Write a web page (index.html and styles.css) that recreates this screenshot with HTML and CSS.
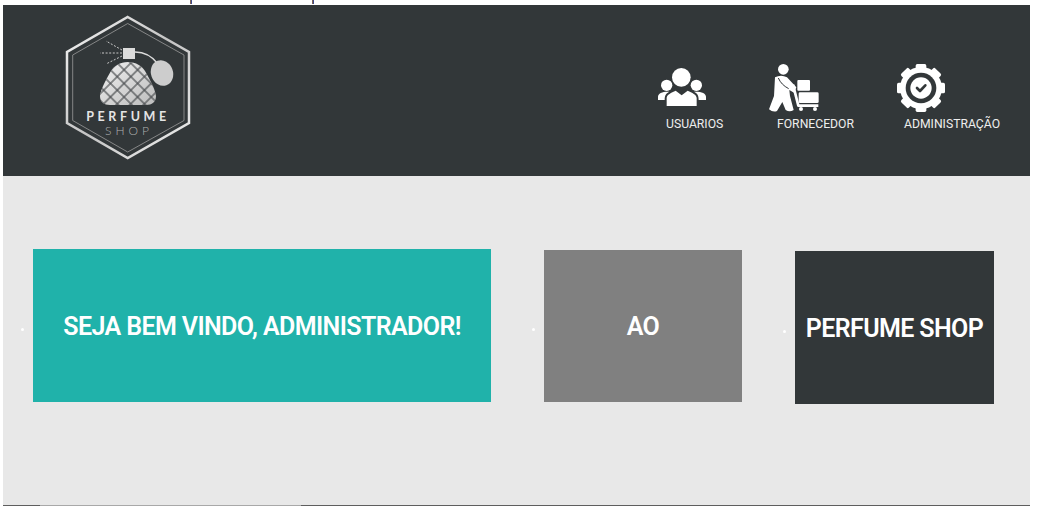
FILE: index.html
```html
<!DOCTYPE html>
<html lang="pt">
<head>
<meta charset="utf-8">
<title>Perfume Shop</title>
<link rel="stylesheet" href="styles.css">
</head>
<body>
<div class="topstrip"><span class="mark mark-a"></span><span class="mark mark-b"></span></div>
<div class="page">
  <header class="header">
    <svg class="logo" viewBox="63 12 130 150" width="130" height="150" aria-label="Perfume Shop">
      <defs>
        <linearGradient id="metal" x1="0" y1="0" x2="1" y2="1">
          <stop offset="0" stop-color="#f0f0f0"/><stop offset="1" stop-color="#bcbcbc"/>
        </linearGradient>
        <linearGradient id="edge" x1="0" y1="0" x2="1" y2="1">
          <stop offset="0" stop-color="#f4f4f4"/><stop offset="0.5" stop-color="#c4c4c4"/><stop offset="1" stop-color="#f0f0f0"/>
        </linearGradient>
        <pattern id="net" width="9.6" height="9.6" patternUnits="userSpaceOnUse" patternTransform="rotate(45 128 84)">
          <rect width="9.6" height="9.6" fill="none" stroke="#4a4d50" stroke-width="1.2"/>
        </pattern>
      </defs>
      <polygon class="hex-outer" points="127.7,17 189,52 189,123 127.7,158 67,123 67,52"/>
      <polygon class="hex-inner" points="127.7,23.5 184,55 184,120.5 127.7,152 72.7,120.5 72.7,55"/>
      <path class="spray" d="M122 53H100M122 50L106 41M122 56L106 64"/>
      <rect x="123" y="48" width="12" height="11" fill="#dcdcdc"/>
      <path class="tube" d="M135 52C145 52 152 56 158 64"/>
      <ellipse cx="162" cy="73" rx="11" ry="13" transform="rotate(-20 162 73)" fill="#cdcdcd"/>
      <path d="M128 62C120 62 114 66 111 71C107 78 101 88 100 96C100 102 104 105 110 105H146C152 105 156 102 156 96C155 88 149 78 145 71C142 66 136 62 128 62Z" fill="url(#metal)"/>
      <path d="M128 62C120 62 114 66 111 71C107 78 101 88 100 96C100 102 104 105 110 105H146C152 105 156 102 156 96C155 88 149 78 145 71C142 66 136 62 128 62Z" fill="url(#net)"/>
      <text class="logo-perfume" x="128" y="120.5" text-anchor="middle">PERFUME</text>
      <text class="logo-shop" x="129" y="134.5" text-anchor="middle">SHOP</text>
    </svg>
    <nav class="nav">
      <a class="nav-item">
        <svg class="nav-icon" viewBox="0 -6 168 168" width="56" height="56">
          <circle cx="82" cy="46" r="28"/>
          <circle cx="38" cy="70" r="17"/>
          <circle cx="127" cy="70" r="17"/>
          <path d="M12 114V104C12 94 26 88 46 89C35 94 32 101 32 114Z"/>
          <path d="M156 114V104C156 94 142 88 120 89C131 94 134 101 134 114Z"/>
          <path d="M38 132V108C38 98 52 92 65 86L83 100L101 86C114 92 128 98 128 108V132Z"/>
        </svg>
        <span class="nav-label">USUARIOS</span>
      </a>
      <a class="nav-item">
        <svg class="nav-icon" viewBox="0 0 168 168" width="56" height="56">
          <circle cx="55" cy="28" r="16"/>
          <path d="M30 52Q48 42 66 52L94 82L87 98L73 90L75 108L86 150Q74 158 62 150L52 126L36 153Q24 158 12 148L27 108Z"/>
          <path class="icon-cut" d="M40 54C46 68 56 78 71 86"/>
          <path class="icon-line" d="M84 74L100 137H160"/>
          <rect x="97" y="60" width="38" height="32" rx="3"/>
          <rect x="101" y="97" width="60" height="32" rx="4"/>
          <circle cx="108" cy="147" r="6"/>
          <circle cx="150" cy="147" r="6"/>
        </svg>
        <span class="nav-label">FORNECEDOR</span>
      </a>
      <a class="nav-item">
        <svg class="nav-icon" viewBox="0 0 168 168" width="56" height="56">
          <g>
            <rect x="68" y="12" width="32" height="30" rx="5"/>
            <rect x="68" y="12" width="32" height="30" rx="5" transform="rotate(45 84 84)"/>
            <rect x="68" y="12" width="32" height="30" rx="5" transform="rotate(90 84 84)"/>
            <rect x="68" y="12" width="32" height="30" rx="5" transform="rotate(135 84 84)"/>
            <rect x="68" y="12" width="32" height="30" rx="5" transform="rotate(180 84 84)"/>
            <rect x="68" y="12" width="32" height="30" rx="5" transform="rotate(225 84 84)"/>
            <rect x="68" y="12" width="32" height="30" rx="5" transform="rotate(270 84 84)"/>
            <rect x="68" y="12" width="32" height="30" rx="5" transform="rotate(315 84 84)"/>
          </g>
          <circle cx="84" cy="84" r="63"/>
          <circle class="icon-dark" cx="84" cy="84" r="46"/>
          <circle cx="84" cy="84" r="32"/>
          <path class="icon-check" d="M72 84L81 93L97 76"/>
        </svg>
        <span class="nav-label nav-label-last">ADMINISTRAÇÃO</span>
      </a>
    </nav>
  </header>
  <main class="main">
    <div class="item item-welcome">
      <span class="dot"></span>
      <div class="card card-teal">SEJA BEM VINDO, ADMINISTRADOR!</div>
    </div>
    <div class="item item-ao">
      <span class="dot"></span>
      <div class="card card-grey">AO</div>
    </div>
    <div class="item item-shop">
      <span class="dot"></span>
      <div class="card card-dark">PERFUME SHOP</div>
    </div>
  </main>
  <div class="rule"><span class="rule-a"></span><span class="rule-b"></span><span class="rule-c"></span></div>
</div>
</body>
</html>
```
FILE: styles.css
```css
* { box-sizing: border-box; }
html, body { margin: 0; padding: 0; background: #fff; }
body { height: 510px; overflow: hidden; font-family: Roboto, "Liberation Sans", sans-serif; }

.topstrip { display: flex; height: 5px; padding-left: 190px; }
.mark { display: block; width: 2px; height: 4px; background: linear-gradient(90deg, #a0703a, #1f3fa8); }
.mark-b { margin-left: 120px; }

.page { width: 1027px; margin-left: 3px; }

.header { display: flex; height: 171px; background: #323739; }
.logo { display: block; margin: 7px 0 0 60px; }
.hex-outer { fill: none; stroke: url(#edge); stroke-width: 2.5; }
.hex-inner { fill: none; stroke: #9a9a9a; stroke-width: 0.8; }
.spray { fill: none; stroke: #c8c8c8; stroke-width: 1; stroke-dasharray: 2 1.6; }
.tube { fill: none; stroke: #dcdcdc; stroke-width: 1.4; }
.logo-perfume { font-family: Lato, sans-serif; font-weight: 700; font-size: 12.5px; letter-spacing: 3.6px; fill: #e4e4e4; }
.logo-shop { font-family: Lato, sans-serif; font-weight: 300; font-size: 12px; letter-spacing: 4px; fill: #b0b0b0; }

.nav { display: grid; grid-template-columns: 111px 128px 137px; margin: 55px 0 0 auto; }
.nav-item { display: flex; flex-direction: column; align-items: flex-start; color: #eee; }
.nav-icon { display: block; fill: #fff; }
.nav-label { margin: 1px 0 0 12px; font-size: 12.2px; line-height: 14px; font-weight: 400; white-space: nowrap; color: #eeeeee; }
.nav-label-last { margin-left: 11px; }
.icon-dark { fill: #323739; }
.icon-cut { fill: none; stroke: #323739; stroke-width: 3; }
.icon-line { fill: none; stroke: #fff; stroke-width: 8; stroke-linejoin: round; }
.icon-check { fill: none; stroke: #323739; stroke-width: 8; stroke-linecap: round; stroke-linejoin: round; }

.main { display: flex; align-items: flex-start; height: 329px; padding: 73px 0 0 18px; background: #e8e8e8; }
.item { display: flex; align-items: center; }
.item-ao { margin: 1px 0 0 41px; }
.item-shop { margin: 2px 0 0 41px; }
.dot { width: 3px; height: 3px; margin: 7px 9px 0 0; border-radius: 50%; background: #fff; }

.card { display: flex; align-items: center; justify-content: center; height: 153px; padding-top: 1px; color: #fff; font-size: 25px; font-weight: 600; letter-spacing: -0.6px; white-space: nowrap; }
.card-teal { width: 458px; background: #20b2aa; }
.card-grey { width: 198px; height: 152px; background: #808080; }
.card-dark { width: 199px; background: #323739; }

.rule { display: flex; height: 1px; }
.rule-a { width: 37px; background: #5e5e5e; }
.rule-b { width: 261px; background: #a8a8a8; }
.rule-c { flex: 1; background: #5e5e5e; }
```
